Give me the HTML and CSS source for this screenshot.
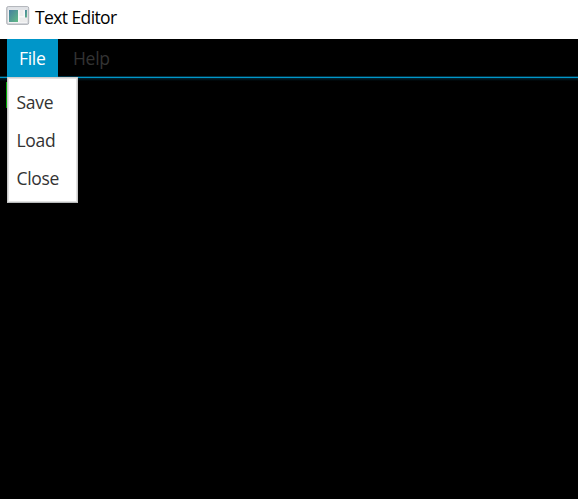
FILE: index.html
```html
<!DOCTYPE html>
<html lang="en">
<head>
<meta charset="utf-8">
<title>Text Editor</title>
<link rel="stylesheet" href="styles.css">
</head>
<body>
<div class="window">
  <header class="titlebar">
    <svg class="app-icon" width="24" height="20" viewBox="0 0 24 20">
      <defs>
        <linearGradient id="pane" x1="0" y1="0" x2="1" y2="1">
          <stop offset="0" stop-color="#457fa0"/>
          <stop offset="1" stop-color="#62ba85"/>
        </linearGradient>
      </defs>
      <rect x="0.7" y="0.6" width="22" height="17.8" rx="1.5" fill="#d5d8dd" stroke="#b0b3b8"/>
      <path d="M2 2H22" stroke="#eceef1"/>
      <rect x="2.2" y="3.6" width="19" height="13.3" fill="#f8f8f8"/>
      <rect x="3" y="4" width="9" height="12" fill="url(#pane)"/>
      <path d="M13.5 4H17.5V10H13.5ZM13.5 11.5H21V16H13.5Z" fill="#ececec"/>
      <rect x="19" y="4" width="2" height="7.5" fill="url(#pane)"/>
    </svg>
    <h1 class="title">Text Editor</h1>
  </header>
  <nav class="menubar">
    <div class="menu open"><span class="file-label">File</span>
      <ul class="dropdown">
        <li class="save">Save</li>
        <li class="load">Load</li>
        <li class="close">Close</li>
      </ul>
    </div>
    <div class="menu help">Help</div>
  </nav>
  <main class="editor"><div class="caret"></div></main>
</div>
</body>
</html>
```
FILE: styles.css
```css
* { box-sizing: border-box; }
body {
  margin: 0;
  background: #fff;
  font: 17.5px/24px "Open Sans", "Noto Sans", sans-serif;
}
.window {
  display: flex;
  flex-direction: column;
  width: 578px;
  height: 499px;
  background: #000;
}
.titlebar {
  display: flex;
  flex: none;
  height: 39px;
  padding: 6px 0 0 6px;
  background: #fff;
}
.app-icon { flex: none; }
.title {
  margin: -1px 0 0 5px;
  color: #000;
  font-size: 17.5px;
  font-weight: 400;
  line-height: 24px;
  letter-spacing: -0.6px;
}
.menubar {
  display: flex;
  flex: none;
  height: 42px;
  padding-left: 7px;
  background: linear-gradient(#000 0 37px, #003345 37px 38px, #0096c9 38px 39px, #002634 39px, #000 42px);
}
.menu {
  position: relative;
  height: 38px;
  padding: 7px 0 0 15px;
  color: #333;
  letter-spacing: -0.3px;
}
.open {
  width: 51px;
  padding-left: 12px;
  background: #0096c9;
  color: #fff;
}
.dropdown {
  position: absolute;
  z-index: 1;
  top: 38px;
  left: 0;
  width: 71px;
  height: 126px;
  margin: 0;
  padding: 5px 0 0 8.5px;
  border: 1px solid #c8c8c8;
  border-color: #d0d0d0 #c8c8c8 #b8babb #c8c8c8;
  box-shadow: inset 0 0 0 1px #e2e2e2;
  background: #fff;
  color: #333;
  line-height: 38px;
  list-style: none;
}
.editor { flex: 1; padding: 1px 0 0 6px; }
.caret { width: 2px; height: 26px; background: #00a800; }
```
